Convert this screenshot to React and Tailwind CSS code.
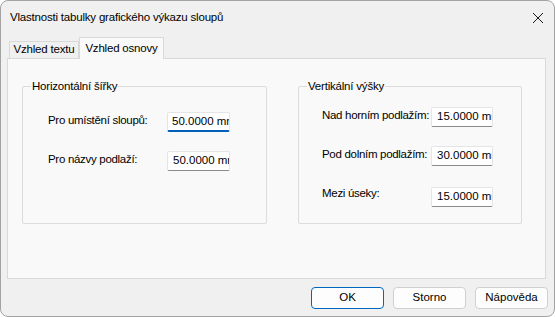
import React from "react";

const font = { fontFamily: '"Liberation Sans", Arial, sans-serif' };

function Field({ value, focused, width }) {
  return (
    <div
      className={`h-[20px] ${width} shrink-0 bg-white border border-[#e5e5e5] rounded-[2px] overflow-hidden flex items-center pl-[5px] text-[11.5px] text-black whitespace-nowrap ${
        focused ? "border-b-2 border-b-[#005fb8]" : "border-b-[#8a8a8a]"
      }`}
    >
      {focused && <span className="w-px h-[14px] bg-black -mr-px" />}
      <span>{value}</span>
    </div>
  );
}

function Row({ label, value, focused, labelW, fieldW, className = "", lift = "-translate-y-[2px]" }) {
  return (
    <div className={`flex items-center ${className}`}>
      <span className={`${labelW} shrink-0 text-[11.5px] leading-[16px] tracking-[-0.3px] text-black ${lift} whitespace-nowrap`}>
        {label}
      </span>
      <Field value={value} focused={focused} width={fieldW} />
    </div>
  );
}

export default function App() {
  return (
    <div className="w-[555px] h-[317px] bg-white">
      <div
        className="w-[555px] h-[317px] border border-[#a3a3a3] rounded-[8px] bg-[#f0f0f0] flex flex-col overflow-hidden"
        style={font}
      >
        {/* Title bar */}
        <div className="h-[34px] flex items-center justify-between pl-[9px] pr-[8px] shrink-0">
          <span className="text-[11.5px] tracking-[-0.2px] text-black">Vlastnosti tabulky grafického výkazu sloupů</span>
          <svg width="14" height="14" viewBox="0 0 14 14" className="mr-[1px]">
            <path d="M2 2 L12 12 M12 2 L2 12" stroke="#1a1a1a" strokeWidth="1" fill="none" />
          </svg>
        </div>

        {/* Tabs */}
        <div className="flex items-end pl-[8px] h-[23px] shrink-0 relative z-10">
          <div className="w-[70px] h-[17px] border border-[#d9d9d9] border-b-0 bg-[#f0f0f0] flex items-center justify-center text-[11.5px] tracking-[-0.2px] text-black">
            Vzhled textu
          </div>
          <div className="w-[85px] h-[22px] border border-[#d9d9d9] border-b-0 bg-[#f9f9f9] flex justify-center pt-[3px] text-[11.5px] leading-[14px] tracking-[-0.2px] text-black -mb-px">
            Vzhled osnovy
          </div>
        </div>

        {/* Panel */}
        <div className="ml-[6px] w-[539px] h-[221px] border border-[#d9d9d9] bg-[#f9f9f9] flex items-start pt-[19px] pl-[14px] shrink-0">
          <fieldset className="w-[245px] h-[146px] border border-[#dcdcdc] rounded-[2px] p-0">
            <legend className="text-[11.5px] leading-[16px] tracking-[-0.2px] text-black px-[1px] ml-[8px]">Horizontální šířky</legend>
            <div className="pl-[25px] pt-[18px]">
              <Row
                label="Pro umístění sloupů:"
                value="50.0000 mm"
                focused
                labelW="w-[119px]"
                fieldW="w-[63px]"
              />
              <Row
                className="mt-[19px]"
                label="Pro názvy podlaží:"
                value="50.0000 mm"
                labelW="w-[119px]"
                fieldW="w-[63px]"
              />
            </div>
          </fieldset>
          <fieldset className="ml-[31px] w-[224px] h-[146px] border border-[#dcdcdc] rounded-[2px] p-0">
            <legend className="text-[11.5px] leading-[16px] tracking-[-0.2px] text-black px-[1px] ml-[8px]">Vertikální výšky</legend>
            <div className="pl-[23px] pt-[13px]">
              <Row
                label="Nad horním podlažím:"
                value="15.0000 mm"
                labelW="w-[109px]"
                fieldW="w-[62px]"
              />
              <Row
                className="mt-[19px]"
                label="Pod dolním podlažím:"
                value="30.0000 mm"
                labelW="w-[109px]"
                fieldW="w-[62px]"
              />
              <Row
                className="mt-[21px]"
                label="Mezi úseky:"
                value="15.0000 mm"
                labelW="w-[109px]"
                fieldW="w-[62px]"
                lift="-translate-y-[4px]"
              />
            </div>
          </fieldset>
        </div>

        {/* Buttons */}
        <div className="flex justify-end gap-[9px] pr-[6px] pt-[8px]">
          <button className="w-[73px] h-[22px] rounded-[4px] border border-[#0067c0] bg-[#fdfdfd] text-[11.5px] text-black">
            OK
          </button>
          <button className="w-[73px] h-[22px] rounded-[4px] border border-[#d0d0d0] bg-[#fdfdfd] text-[11.5px] text-black">
            Storno
          </button>
          <button className="w-[73px] h-[22px] rounded-[4px] border border-[#d0d0d0] bg-[#fdfdfd] text-[11.5px] text-black">
            Nápověda
          </button>
        </div>
      </div>
    </div>
  );
}
